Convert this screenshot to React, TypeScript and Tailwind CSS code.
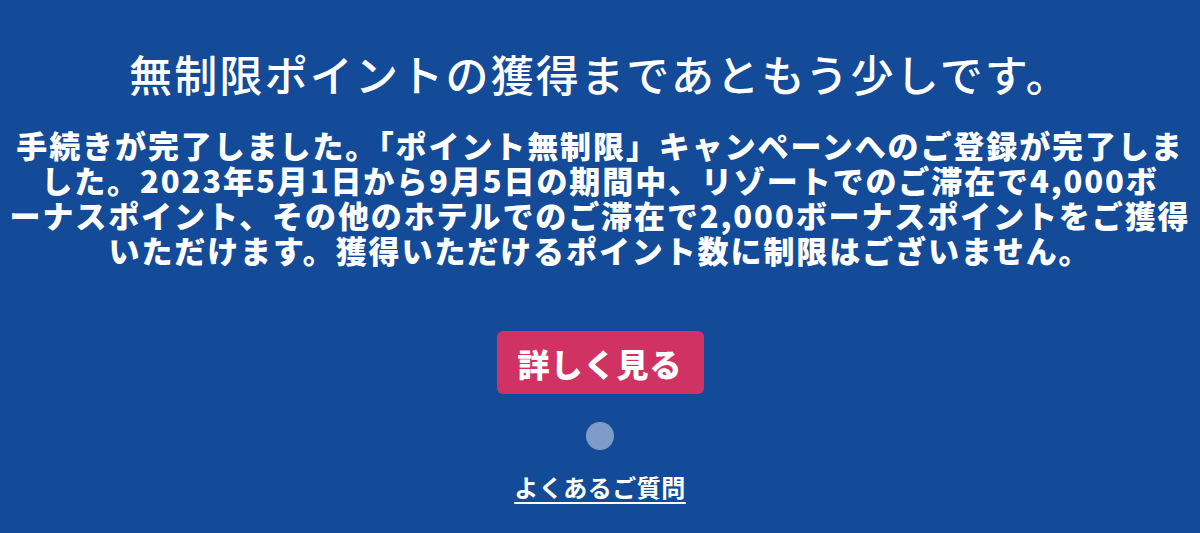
export default function App() {
  const jp = { fontFamily: '"Noto Sans CJK JP", "Noto Sans", sans-serif' };
  return (
    <div className="w-[1200px] h-[533px] bg-[#134b98] text-white flex flex-col items-center overflow-hidden" style={jp}>
      <h1 className="mt-[45px] text-[43px] leading-[56px] font-medium tracking-[2.2px] text-center">
        無制限ポイントの獲得まであともう少しです。
      </h1>
      <p className="mt-[26px] w-[1196px] text-[31px] leading-[35px] font-black text-center tracking-[1.9px]">
        手続きが完了しました。「ポイント無制限」キャンペーンへのご登録が完了しま
        <br />
        した。2023年5月1日から9月5日の期間中、リゾートでのご滞在で4,000ボ
        <br />
        ーナスポイント、その他のホテルでのご滞在で2,000ボーナスポイントをご獲得
        <br />
        いただけます。獲得いただけるポイント数に制限はございません。
      </p>
      <button className="mt-[64px] w-[207px] h-[63px] rounded-[6px] bg-[#d03363] text-white text-[32px] font-black tracking-[1px]">
        詳しく見る
      </button>
      <div className="mt-[28px] w-[28px] h-[28px] rounded-full bg-[#7f9cc9]" />
      <a className="mt-[22px] text-[24px] leading-[30px] font-bold underline underline-offset-[5px] tracking-[0.5px]">
        よくあるご質問
      </a>
    </div>
  );
}
